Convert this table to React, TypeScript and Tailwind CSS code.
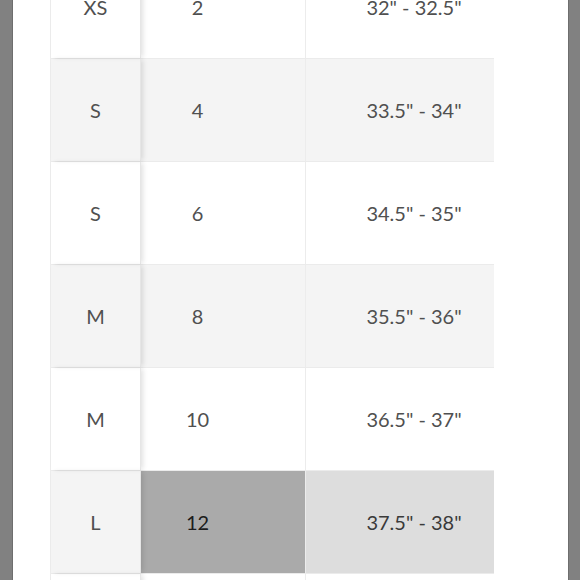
const rows = [
  { size: 'XS', us: '2', bust: '32" - 32.5"' },
  { size: 'S', us: '4', bust: '33.5" - 34"' },
  { size: 'S', us: '6', bust: '34.5" - 35"' },
  { size: 'M', us: '8', bust: '35.5" - 36"' },
  { size: 'M', us: '10', bust: '36.5" - 37"' },
  { size: 'L', us: '12', bust: '37.5" - 38"', active: true },
  { size: 'L', us: '14', bust: '38.5" - 39"' },
]

export default function App() {
  return (
    <div className="flex h-[580px] w-[580px] overflow-hidden bg-white" style={{ fontFamily: 'Lato, "Open Sans", sans-serif' }}>
      <div className="w-[13px] shrink-0 border-r border-[#6e6e6e] bg-[#818181]" />
      <div className="flex-1 overflow-hidden pl-[37px]">
        <div className="mt-[-44px] flex w-[444px] flex-col border-l border-[#ececec]">
          {rows.map((r, i) => {
            const shaded = i % 2 === 1
            return (
              <div key={i} className={`flex h-[103px] border-b border-[#ebebeb] text-[20px] font-normal text-[#505050] ${shaded ? 'bg-[#f4f4f4]' : 'bg-white'}`}>
                <div className="relative z-10 flex w-[90px] items-center justify-center border-r border-[#e6e6e6] shadow-[3px_0_5px_-1px_rgba(0,0,0,0.12)]">
                  {r.size}
                </div>
                <div className={`flex w-[165px] items-center justify-center border-r border-[#ececec] pr-[51px] ${r.active ? 'bg-[#aaaaaa] text-[#1c1c1c]' : ''}`}>
                  {r.us}
                </div>
                <div className={`flex w-[188px] items-center justify-center pl-[28px] ${r.active ? 'bg-[#dddddd] text-[#3a3a3a]' : ''}`}>
                  {r.bust}
                </div>
              </div>
            )
          })}
        </div>
      </div>
      <div className="w-[12px] shrink-0 border-l border-[#6e6e6e] bg-[#818181]" />
    </div>
  )
}
